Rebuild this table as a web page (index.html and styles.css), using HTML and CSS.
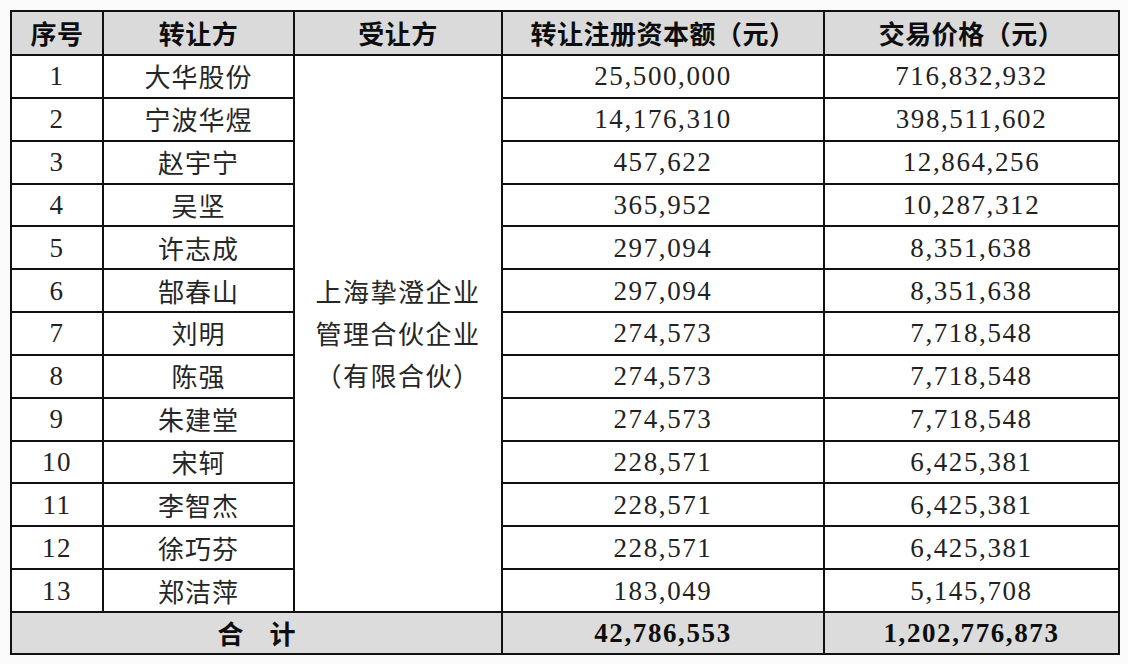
FILE: index.html
```html
<!DOCTYPE html>
<html lang="zh-CN">
<head>
<meta charset="utf-8">
<title>转让表</title>
<link rel="stylesheet" href="styles.css">
</head>
<body>
<div class="page">
<table class="deal">
  <colgroup>
    <col class="c-no">
    <col class="c-from">
    <col class="c-to">
    <col class="c-cap">
    <col class="c-price">
  </colgroup>
  <thead>
    <tr class="head">
      <th>序号</th>
      <th>转让方</th>
      <th>受让方</th>
      <th>转让注册资本额（元）</th>
      <th>交易价格（元）</th>
    </tr>
  </thead>
  <tbody>
    <tr><td class="num">1</td><td class="name">大华股份</td>
      <td class="buyer" rowspan="13">上海挚澄企业<br>管理合伙企业<br>（有限合伙）</td>
      <td class="num">25,500,000</td><td class="num">716,832,932</td></tr>
    <tr><td class="num">2</td><td class="name">宁波华煜</td><td class="num">14,176,310</td><td class="num">398,511,602</td></tr>
    <tr><td class="num">3</td><td class="name">赵宇宁</td><td class="num">457,622</td><td class="num">12,864,256</td></tr>
    <tr><td class="num">4</td><td class="name">吴坚</td><td class="num">365,952</td><td class="num">10,287,312</td></tr>
    <tr><td class="num">5</td><td class="name">许志成</td><td class="num">297,094</td><td class="num">8,351,638</td></tr>
    <tr><td class="num">6</td><td class="name">郜春山</td><td class="num">297,094</td><td class="num">8,351,638</td></tr>
    <tr><td class="num">7</td><td class="name">刘明</td><td class="num">274,573</td><td class="num">7,718,548</td></tr>
    <tr><td class="num">8</td><td class="name">陈强</td><td class="num">274,573</td><td class="num">7,718,548</td></tr>
    <tr><td class="num">9</td><td class="name">朱建堂</td><td class="num">274,573</td><td class="num">7,718,548</td></tr>
    <tr><td class="num">10</td><td class="name">宋轲</td><td class="num">228,571</td><td class="num">6,425,381</td></tr>
    <tr><td class="num">11</td><td class="name">李智杰</td><td class="num">228,571</td><td class="num">6,425,381</td></tr>
    <tr><td class="num">12</td><td class="name">徐巧芬</td><td class="num">228,571</td><td class="num">6,425,381</td></tr>
    <tr><td class="num">13</td><td class="name">郑洁萍</td><td class="num">183,049</td><td class="num">5,145,708</td></tr>
  </tbody>
  <tfoot>
    <tr class="total">
      <td class="label" colspan="3">合　计</td>
      <td class="num">42,786,553</td>
      <td class="num">1,202,776,873</td>
    </tr>
  </tfoot>
</table>
</div>
</body>
</html>
```

FILE: styles.css
```css
html, body {
  margin: 0;
  padding: 0;
  background: #fbfbfb;
}

.page {
  padding: 10px 0 0 10px;
}

.deal {
  border-collapse: collapse;
  table-layout: fixed;
  width: 1108px;
  background: #ffffff;
  color: #1e1e1e;
  font-family: "Liberation Serif", "Noto Sans CJK SC", serif;
  font-size: 26px;
}

.c-no { width: 92px; }
.c-from { width: 191px; }
.c-to { width: 208px; }
.c-cap { width: 322px; }
.c-price { width: 295px; }

.deal th,
.deal td {
  border: 2px solid #111111;
  padding: 0;
  text-align: center;
  vertical-align: middle;
  line-height: 30px;
}

.head th {
  height: 42px;
  background: #dadada;
  color: #0d0d0d;
  font-family: "Noto Sans CJK SC", sans-serif;
  font-weight: 700;
  font-size: 26px;
  letter-spacing: 0.5px;
}

.deal tbody tr {
  height: 42.85px;
}

.name {
  font-family: "Noto Sans CJK SC", sans-serif;
  font-weight: 400;
  font-size: 26px;
  letter-spacing: 1px;
  color: #262626;
}

.num {
  font-family: "Liberation Serif", serif;
  font-size: 27px;
  letter-spacing: 1.6px;
  color: #222222;
  padding-top: 2px;
}

.buyer {
  font-family: "Noto Sans CJK SC", sans-serif;
  font-size: 26px;
  line-height: 42px !important;
  letter-spacing: 1.5px;
  color: #262626;
}

.total {
  height: 42px;
}

.total td {
  background: #dcdcdc;
  color: #0d0d0d;
}

.total .label {
  font-family: "Noto Sans CJK SC", sans-serif;
  font-weight: 700;
  font-size: 26px;
}

.total .num {
  font-weight: 700;
  font-size: 27px;
  letter-spacing: 1.6px;
}
```
